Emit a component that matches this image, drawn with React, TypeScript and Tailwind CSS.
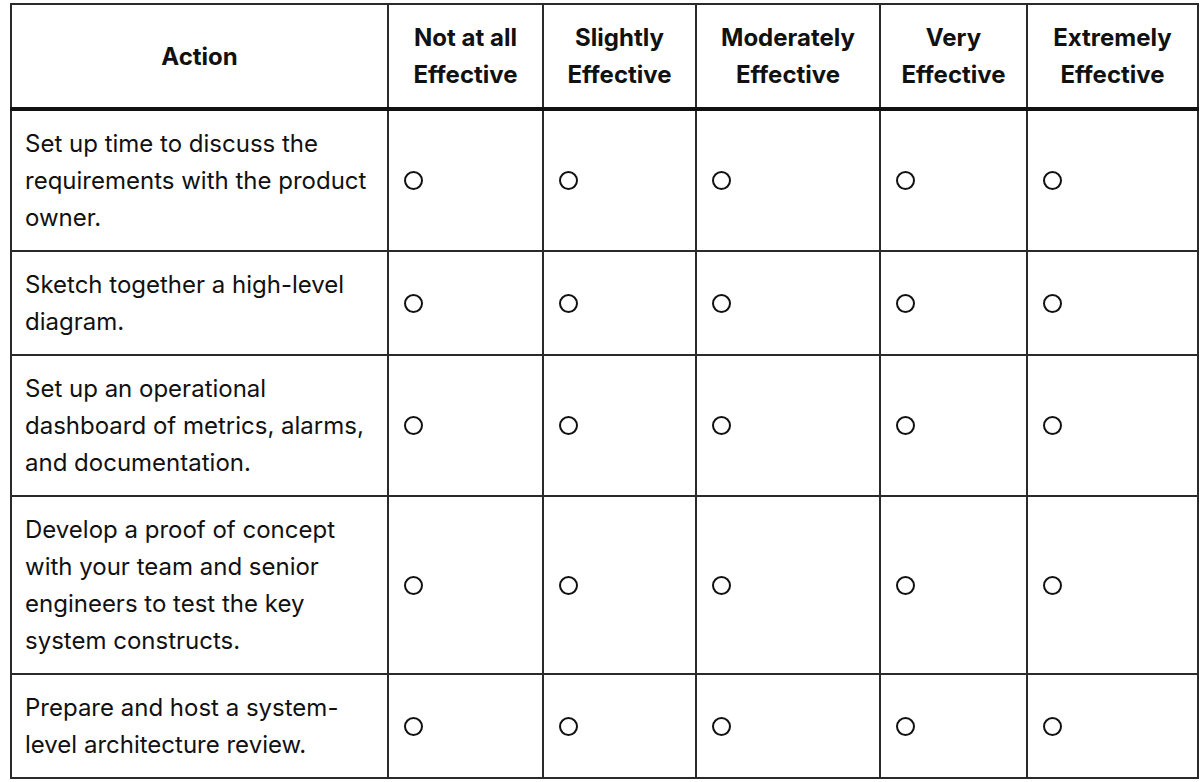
import React from 'react';

const columns = [
  ['Not at all', 'Effective'],
  ['Slightly', 'Effective'],
  ['Moderately', 'Effective'],
  ['Very', 'Effective'],
  ['Extremely', 'Effective'],
];

const actions = [
  'Set up time to discuss the requirements with the product owner.',
  'Sketch together a high-level diagram.',
  'Set up an operational dashboard of metrics, alarms, and documentation.',
  'Develop a proof of concept with your team and senior engineers to test the key system constructs.',
  'Prepare and host a system-level architecture review.',
];

const Radio = () => (
  <span className="block w-[19px] h-[19px] rounded-full border-2 border-[#111]" />
);

export default function App() {
  return (
    <div
      className="bg-white w-[1200px] h-[782px] pl-[10px] pt-[3px] text-[#111]"
      style={{ fontFamily: 'Inter, "Liberation Sans", sans-serif' }}
    >
      <table className="table-fixed border-collapse w-[1187px] text-[24px] leading-[37px]">
        <colgroup>
          <col className="w-[377px]" />
          <col className="w-[155px]" />
          <col className="w-[153px]" />
          <col className="w-[184px]" />
          <col className="w-[147px]" />
          <col className="w-[171px]" />
        </colgroup>
        <thead>
          <tr className="border-b-4 border-b-[#111]">
            <th className="border-2 border-[#2a2a2a] font-bold text-center align-middle py-[14px]">
              Action
            </th>
            {columns.map(([a, b]) => (
              <th
                key={a}
                className="border-2 border-[#2a2a2a] font-bold text-center align-middle py-[14px]"
              >
                {a}
                <br />
                {b}
              </th>
            ))}
          </tr>
        </thead>
        <tbody>
          {actions.map((text) => (
            <tr key={text}>
              <td className="border-2 border-[#2a2a2a] px-[13px] py-[14px] align-middle">
                {text}
              </td>
              {columns.map(([a]) => (
                <td key={a} className="border-2 border-[#2a2a2a] pl-[15px] align-middle">
                  <Radio />
                </td>
              ))}
            </tr>
          ))}
        </tbody>
      </table>
    </div>
  );
}
